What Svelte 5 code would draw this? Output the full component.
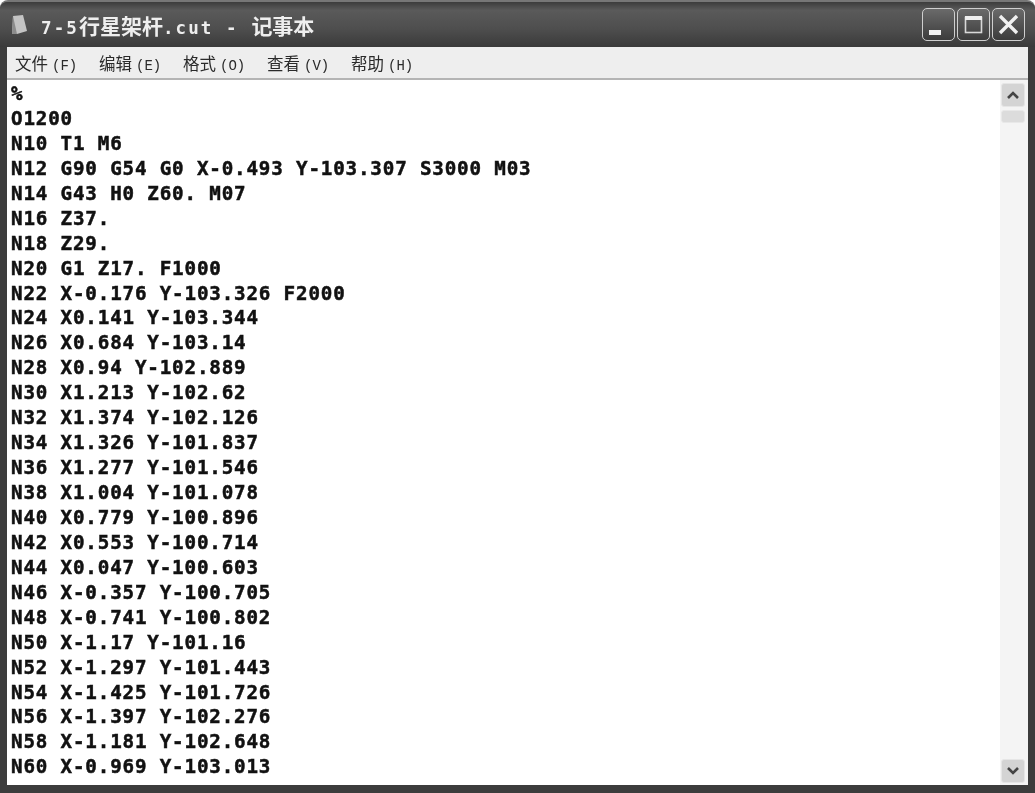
<script lang="ts">
  const lines = [
    '%', 'O1200', 'N10 T1 M6', 'N12 G90 G54 G0 X-0.493 Y-103.307 S3000 M03', 'N14 G43 H0 Z60. M07',
    'N16 Z37.', 'N18 Z29.', 'N20 G1 Z17. F1000', 'N22 X-0.176 Y-103.326 F2000', 'N24 X0.141 Y-103.344',
    'N26 X0.684 Y-103.14', 'N28 X0.94 Y-102.889', 'N30 X1.213 Y-102.62', 'N32 X1.374 Y-102.126',
    'N34 X1.326 Y-101.837', 'N36 X1.277 Y-101.546', 'N38 X1.004 Y-101.078', 'N40 X0.779 Y-100.896',
    'N42 X0.553 Y-100.714', 'N44 X0.047 Y-100.603', 'N46 X-0.357 Y-100.705', 'N48 X-0.741 Y-100.802',
    'N50 X-1.17 Y-101.16', 'N52 X-1.297 Y-101.443', 'N54 X-1.425 Y-101.726', 'N56 X-1.397 Y-102.276',
    'N58 X-1.181 Y-102.648', 'N60 X-0.969 Y-103.013'
  ];
  const menus = [['文件', 'F'], ['编辑', 'E'], ['格式', 'O'], ['查看', 'V'], ['帮助', 'H']];
</script>

<div class="window">
  <header class="titlebar">
    <svg class="app-icon" width="18" height="22" viewBox="0 0 18 22">
      <path d="M3 2 L13 1 L17 17 L7 20 L2 20 Z" fill="#c4c4c4" />
      <path d="M3 2 L7 20 L2 20 Z" fill="#8c8c8c" />
    </svg>
    <span class="title"><span class="latin">7-5</span>行星架杆<span class="latin">{'.cut - '}</span>记事本</span>
    <div class="controls">
      <button class="ctl" aria-label="minimize">
        <svg width="33" height="33" viewBox="0 0 33 33"><rect x="7" y="22" width="12" height="5" fill="#f2f2f2" /></svg>
      </button>
      <button class="ctl" aria-label="maximize">
        <svg width="33" height="33" viewBox="0 0 33 33"><rect x="8.5" y="9.5" width="16" height="15" fill="none" stroke="#d8d8d8" stroke-width="1.6" /><rect x="8" y="8" width="17" height="4" fill="#eee" /></svg>
      </button>
      <button class="ctl" aria-label="close">
        <svg width="33" height="33" viewBox="0 0 33 33"><path d="M8 8 L25 25 M25 8 L8 25" stroke="#f0f0f0" stroke-width="3.4" /></svg>
      </button>
    </div>
  </header>

  <nav class="menubar">
    {#each menus as [name, key]}
      <span class="menu">{name}<small>({key})</small></span>
    {/each}
  </nav>

  <div class="body">
    <pre class="text">{lines.join('\n')}</pre>
    <div class="scrollbar">
      <div class="sb-btn">
        <svg width="14" height="10" viewBox="0 0 14 10"><path d="M2 8 L7 3 L12 8" fill="none" stroke="#444" stroke-width="2.6" /></svg>
      </div>
      <div class="thumb"></div>
      <div class="track"></div>
      <div class="sb-btn">
        <svg width="14" height="10" viewBox="0 0 14 10"><path d="M2 2 L7 7 L12 2" fill="none" stroke="#444" stroke-width="2.6" /></svg>
      </div>
    </div>
  </div>
</div>

<style>
  :global(body) {
    margin: 0;
    background: #fff;
  }

  .window {
    width: 1035px;
    height: 793px;
    box-sizing: border-box;
    display: flex;
    flex-direction: column;
    background: #3c3c3c;
    padding: 0 7px 8px 7px;
    border-top: 2px solid #777;
    border-radius: 8px 8px 0 0;
    overflow: hidden;
    filter: blur(0.35px);
  }

  .titlebar {
    height: 45px;
    flex: none;
    display: flex;
    align-items: center;
    margin: 0 -7px;
    padding: 0 10px 0 10px;
    background: linear-gradient(180deg, #3c3c3c 0%, #5a5a5a 18%, #4e4e4e 60%, #3a3a3a 100%);
  }

  .app-icon {
    flex: none;
    margin-right: 13px;
  }

  .title {
    flex: 1;
    font: bold 21px "DejaVu Sans Mono", "Noto Sans CJK SC", monospace;
    color: #eee;
    white-space: pre;
  }

  .latin {
    font-size: 17.5px;
    letter-spacing: 2.1px;
  }

  .controls {
    display: flex;
    gap: 2px;
  }

  .ctl {
    width: 33px;
    height: 33px;
    padding: 0;
    border: 1.5px solid #cfcfcf;
    border-radius: 5px;
    background: linear-gradient(180deg, #6a6a6a, #3c3c3c);
    box-sizing: border-box;
    overflow: hidden;
    display: block;
  }

  .ctl svg {
    display: block;
    margin: -1.5px;
  }

  .menubar {
    height: 31px;
    flex: none;
    display: flex;
    align-items: center;
    padding-left: 8px;
    background: #eeeeee;
    border-bottom: 2px solid #b4b4b4;
  }

  .menu {
    width: 84px;
    font: 16.5px "Noto Sans CJK SC", sans-serif;
    color: #2a2a2a;
    white-space: nowrap;
  }

  .menu small {
    font: 14px "Liberation Mono", monospace;
    margin-left: 4px;
  }

  .body {
    flex: 1;
    min-height: 0;
    display: flex;
    background: #fff;
  }

  .text {
    flex: 1;
    margin: 0;
    padding: 2px 0 0 4px;
    font: bold 19.2px/24.93px "DejaVu Sans Mono", monospace;
    letter-spacing: 0.84px;
    -webkit-text-stroke: 0.5px #111;
    color: #111;
    overflow: hidden;
  }

  .scrollbar {
    width: 28px;
    flex: none;
    box-sizing: border-box;
    padding: 3px 3px 2px 1px;
    display: flex;
    flex-direction: column;
    align-items: stretch;
    background: #f4f4f4;
  }

  .sb-btn {
    height: 24px;
    flex: none;
    display: flex;
    align-items: center;
    justify-content: center;
    background: #d4d4d4;
    border: 1px solid #e6e6e6;
    border-radius: 3px;
    box-sizing: border-box;
  }

  .thumb {
    height: 11px;
    flex: none;
    margin-top: 3px;
    background: #dcdcdc;
    border: 1px solid #e8e8e8;
    border-radius: 3px;
  }

  .track {
    flex: 1;
  }
</style>
